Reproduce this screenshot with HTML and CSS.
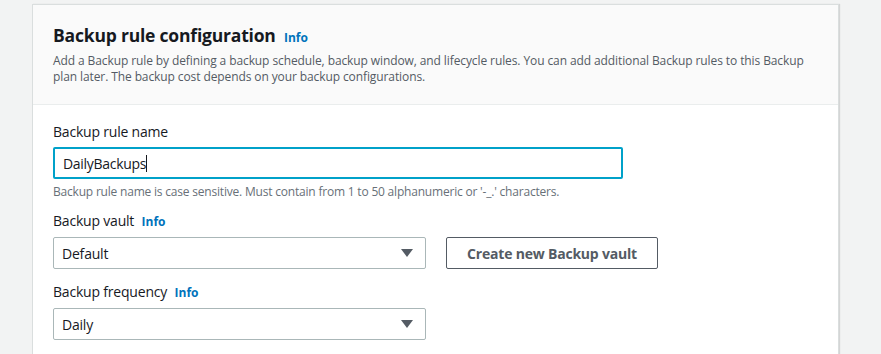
FILE: index.html
```html
<!DOCTYPE html>
<html lang="en">
<head>
  <meta charset="UTF-8" />
  <meta name="viewport" content="width=device-width, initial-scale=1.0" />
  <title>Backup rule configuration</title>
  <link rel="stylesheet" href="styles.css">
</head>
<body>
  <div class="panel">
    <div class="panel-header">
      <h2 class="panel-title">Backup rule configuration <a class="info-link" href="#">Info</a></h2>
      <p class="panel-desc">Add a Backup rule by defining a backup schedule, backup window, and lifecycle rules. You can add additional Backup rules to this Backup plan later. The backup cost depends on your backup configurations.</p>
    </div>
    <div class="panel-body">
      <div class="field">
        <div class="field-label">Backup rule name</div>
        <div class="text-input">DailyBackups<span class="caret"></span></div>
        <div class="field-hint">Backup rule name is case sensitive. Must contain from 1 to 50 alphanumeric or '-_.' characters.</div>
      </div>
      <div class="field field-vault">
        <div class="field-label">Backup vault <a class="info-link" href="#">Info</a></div>
        <div class="field-row">
          <div class="select">
            <span>Default</span>
            <span class="select-arrow"></span>
          </div>
          <button class="btn">Create new Backup vault</button>
        </div>
      </div>
      <div class="field field-freq">
        <div class="field-label">Backup frequency <a class="info-link" href="#">Info</a></div>
        <div class="select">
          <span>Daily</span>
          <span class="select-arrow"></span>
        </div>
      </div>
    </div>
  </div>
</body>
</html>
```

FILE: styles.css
```css
body {
  margin: 0;
  padding: 4px 0 0 32px;
  background: #f2f3f3;
  font-family: "Open Sans", "Liberation Sans", sans-serif;
  color: #16191f;
  height: 350px;
  overflow: hidden;
}
.panel {
  width: 805px;
  background: #fff;
  border: 1px solid #dadede;
  border-bottom: none;
  box-shadow: 1px 0 1px rgba(0,0,0,0.12);
  height: 360px;
}
.panel-header {
  background: #fafafa;
  border-bottom: 1px solid #eaeded;
  padding: 19px 20px 19px;
}
.panel-title {
  margin: 0;
  font-size: 17.5px;
  line-height: 22px;
  font-weight: 700;
  letter-spacing: -0.2px;
}
.info-link {
  color: #0073bb;
  font-size: 12px;
  font-weight: 700;
  text-decoration: none;
  margin-left: 4px;
  letter-spacing: 0;
}
.panel-desc {
  margin: 4px 0 0;
  font-size: 12px;
  line-height: 16px;
  color: #545b64;
  letter-spacing: -0.1px;
}
.panel-body {
  padding: 16px 20px 0;
}
.field-label {
  font-size: 14px;
  line-height: 22px;
  margin-bottom: 4px;
  letter-spacing: -0.2px;
}
.text-input {
  width: 570px;
  height: 32px;
  box-sizing: border-box;
  border: 2px solid #00a1c9;
  border-radius: 2px;
  padding: 0 8px;
  display: flex;
  align-items: center;
  font-size: 14px;
  letter-spacing: -0.3px;
}
.caret {
  display: inline-block;
  width: 1px;
  height: 17px;
  background: #16191f;
}
.field-hint {
  margin-top: 5px;
  font-size: 12px;
  line-height: 16px;
  color: #687078;
  letter-spacing: -0.2px;
}
.field-vault {
  margin-top: 10px;
}
.field-freq {
  margin-top: 12px;
}
.field-row {
  display: flex;
  gap: 20px;
}
.select {
  width: 373px;
  height: 32px;
  box-sizing: border-box;
  border: 1px solid #aab7b8;
  border-radius: 2px;
  padding: 0 12px 0 8px;
  display: flex;
  align-items: center;
  justify-content: space-between;
  font-size: 14px;
  letter-spacing: -0.2px;
}
.select-arrow {
  width: 0;
  height: 0;
  border-left: 6px solid transparent;
  border-right: 6px solid transparent;
  border-top: 8px solid #545b64;
}
.btn {
  height: 32px;
  width: 212px;
  background: #fff;
  border: 1px solid #545b64;
  border-radius: 2px;
  color: #545b64;
  font-family: inherit;
  font-size: 14px;
  font-weight: 700;
  letter-spacing: -0.2px;
  padding: 0 10px;
}
```
